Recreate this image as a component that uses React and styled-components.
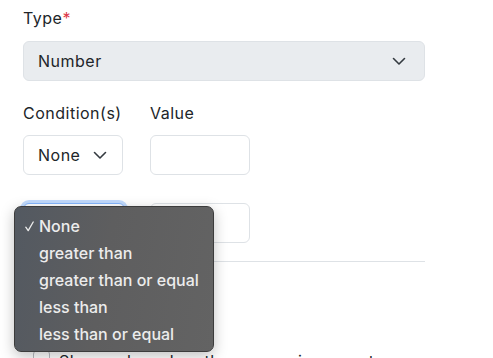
import styled, { createGlobalStyle } from 'styled-components'

const GlobalStyle = createGlobalStyle`
  body {
    margin: 0;
    background: #fff;
    color: #212529;
    font-family: Inter, "Noto Sans", sans-serif;
    font-size: 16px;
    letter-spacing: 0.5px;
  }
`

const Page = styled.div`
  width: 402px;
  padding: 6px 0 0 23px;
  height: 352px;
  overflow: hidden;
  box-sizing: content-box;
`

const Label = styled.div`
  line-height: 24px;
  margin-bottom: ${(p) => p.$gap || 10}px;
  & .req {
    color: #dc3545;
  }
`

const SelectBox = styled.div`
  box-sizing: border-box;
  height: 40px;
  width: ${(p) => p.$width || '100%'};
  display: flex;
  align-items: center;
  justify-content: space-between;
  padding: 0 17px 0 14px;
  border: 1px solid ${(p) => (p.$focus ? '#86b7fe' : '#dee2e6')};
  border-radius: 6px;
  background: ${(p) => (p.$disabled ? '#e9ecef' : '#fff')};
  box-shadow: ${(p) => (p.$focus ? '0 0 0 3px rgba(13,110,253,0.25)' : 'none')};
  font-size: 16px;
  & svg {
    flex: none;
  }
`

const Input = styled.div`
  box-sizing: border-box;
  height: 40px;
  width: 100px;
  border: 1px solid #dee2e6;
  border-radius: 6px;
  background: #fff;
`

const Grid = styled.div`
  display: grid;
  grid-template-columns: 100px 100px;
  column-gap: 27px;
  margin-top: ${(p) => p.$top || 0}px;
`

const Cell = styled.div`
  position: relative;
`

const Rule = styled.div`
  height: 1px;
  background: #dee2e6;
  margin-top: 18px;
`

const Check = styled.label`
  display: flex;
  align-items: flex-start;
  gap: 9px;
  margin: 87px 0 0 10px;
  line-height: 24px;
  font-size: 16px;
  white-space: nowrap;
  & span.box {
    width: 15px;
    height: 15px;
    margin-top: 1px;
    border: 1px solid #b8bcc1;
    border-radius: 4px;
    flex: none;
  }
`

const Menu = styled.div`
  position: absolute;
  left: -9px;
  top: 3px;
  width: 200px;
  box-sizing: border-box;
  padding: 6px 0 3px;
  border: 1px solid #3c3c3c;
  border-radius: 7px;
  background: linear-gradient(100deg, #535961 0%, #5e5e5f 45%, #636363 100%);
  box-shadow: 0 4px 14px rgba(0, 0, 0, 0.25);
  z-index: 5;
`

const Item = styled.div`
  display: flex;
  align-items: center;
  height: 27px;
  line-height: 27px;
  padding-left: 24px;
  color: #ececec;
  font-size: 16px;
  font-weight: 500;
  letter-spacing: 0;
  white-space: nowrap;
`

const Tick = styled.svg`
  flex: none;
  margin-left: -14px;
  margin-right: 5px;
`

const Chevron = () => (
  <svg width="16" height="12" viewBox="0 0 16 12">
    <path d="M2.5 3.5 8 9l5.5-5.5" fill="none" stroke="#343a40" strokeWidth="1.6" strokeLinecap="round" strokeLinejoin="round" />
  </svg>
)

const options = ['None', 'greater than', 'greater than or equal', 'less than', 'less than or equal']

export default function App() {
  return (
    <Page>
      <GlobalStyle />
      <Label $gap={11}>
        Type<span className="req">*</span>
      </Label>
      <SelectBox $disabled>
        <span>Number</span>
        <Chevron />
      </SelectBox>

      <Grid $top={20}>
        <Label>Condition(s)</Label>
        <Label>Value</Label>
        <SelectBox $width="100px" style={{ paddingRight: 14 }}>
          <span>None</span>
          <Chevron />
        </SelectBox>
        <Input />
      </Grid>

      <Grid $top={28}>
        <Cell>
          <SelectBox $width="102px" $focus>
            <span>None</span>
            <Chevron />
          </SelectBox>
          <Menu>
            {options.map((o, i) => (
              <Item key={o}>
                {i === 0 && (
                  <Tick width="9" height="11" viewBox="0 0 9 11">
                    <path d="M0.8 6.2 3.2 9.6 8.2 1" fill="none" stroke="#ececec" strokeWidth="1.3" strokeLinecap="round" strokeLinejoin="round" />
                  </Tick>
                )}
                <span>{o}</span>
              </Item>
            ))}
          </Menu>
        </Cell>
        <Input />
      </Grid>

      <Rule />

      <Check>
        <span className="box" />
        Show value when the answer is correct
      </Check>
    </Page>
  )
}
